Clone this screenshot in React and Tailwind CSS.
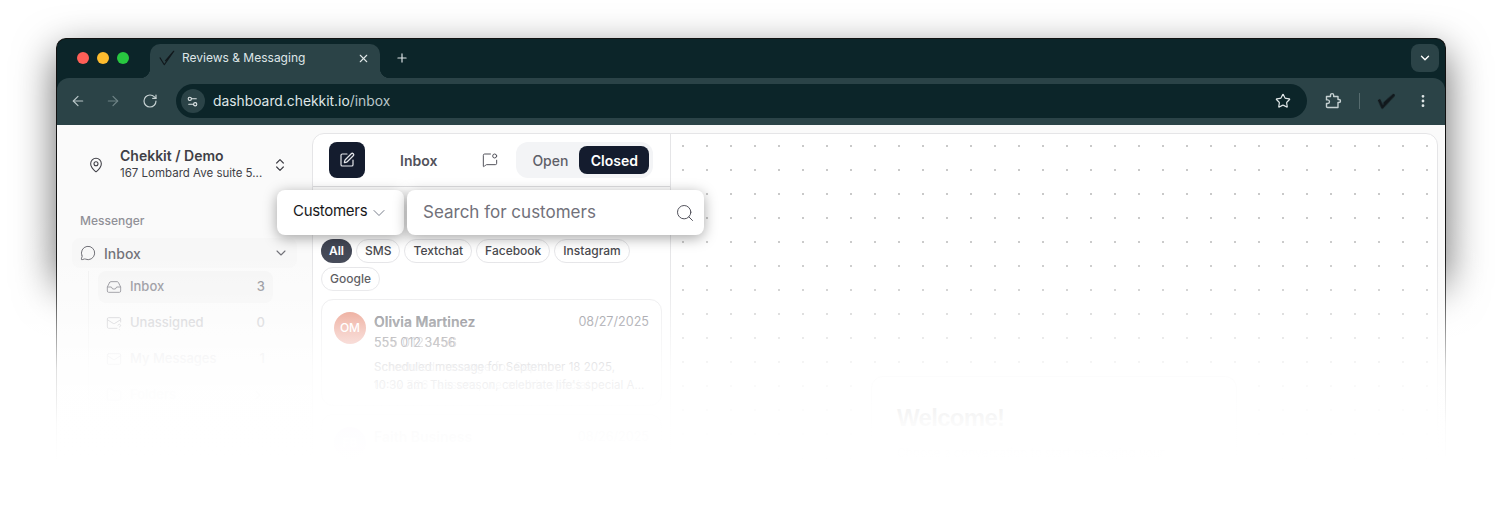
import { ArrowLeft, ArrowRight, RotateCw, Settings2, Star, X, Plus, ChevronDown, ChevronRight, ChevronsUpDown, MapPin, SquarePen, MessageCircle, Inbox, Mail, MailQuestion, Folder, Search, MessageSquareDot, EllipsisVertical } from 'lucide-react';

const chips = ['SMS', 'Textchat', 'Facebook', 'Instagram', 'Google'];

function Check({ className, width = 1.3 }) {
  return (
    <svg viewBox="0 0 20 20" fill="none" className={className}>
      <path d="M2 9.5 L7 17.5 L17.5 2.5 L8 13.5" stroke="currentColor" strokeWidth={width} strokeLinejoin="round" />
    </svg>
  );
}

function SubItem({ icon: Icon, label, count, tone, active }) {
  return (
    <div className={`flex h-[32px] items-center justify-between rounded-lg px-[8px] text-[13px] font-medium ${tone} ${active ? 'bg-[#f5f5f5]' : ''}`}>
      <div className="flex items-center gap-[8px]">
        <Icon className="size-[16px]" strokeWidth={1.5} />
        <span>{label}</span>
      </div>
      <span>{count}</span>
    </div>
  );
}

function Sidebar() {
  return (
    <aside className="flex w-[255px] shrink-0 flex-col px-[15px]">
      <div className="mt-[22px] flex items-center">
        <MapPin className="ml-[16px] size-[16px] text-[#3f3f46]" strokeWidth={1.6} />
        <div className="ml-[16px] w-[144px]">
          <div className="text-[14px] font-semibold leading-[18px] text-[#3f3f46]">Chekkit / Demo</div>
          <div className="whitespace-nowrap text-[11.5px] leading-[17px] text-[#3f3f46]">167 Lombard Ave suite 5...</div>
        </div>
        <ChevronsUpDown className="ml-[8px] size-[16px] text-[#3f3f46]" strokeWidth={1.8} />
      </div>
      <div className="ml-[8px] mt-[30px] text-[12px] font-medium text-[#8f8f96]">Messenger</div>
      <div className="mt-[8px] flex h-[30px] items-center justify-between rounded-lg bg-[#f7f7f7] px-[8px] text-[14px] font-medium text-[#6b6b72]">
        <div className="flex items-center gap-[8px]">
          <MessageCircle className="size-[16px]" strokeWidth={1.5} />
          <span>Inbox</span>
        </div>
        <ChevronDown className="size-[16px]" strokeWidth={1.6} />
      </div>
      <div className="ml-[16px] mt-[3px] flex w-[201px] flex-col gap-[4px] border-l border-[#f0f0f0] pl-[9px] pr-[16px]">
        <SubItem icon={Inbox} label="Inbox" count="3" tone="text-[#8b8b92]" active />
        <SubItem icon={MailQuestion} label="Unassigned" count="0" tone="text-[#c4c4c8]" />
        <SubItem icon={Mail} label="My Messages" count="1" tone="text-[#dcdce0]" />
        <SubItem icon={Folder} label="Folders" count={<ChevronRight className="size-[14px]" />} tone="text-[#e6e6ea]" />
      </div>
    </aside>
  );
}

function Card({ initials, avatar, name, date, phone, lines, ghost }) {
  return (
    <div className="relative h-[107px] rounded-xl border border-[#e8e8ea] bg-white px-[12px] pt-[12px]">
      <div className={`flex size-[32px] items-center justify-center rounded-full text-[12px] font-medium text-white ${avatar}`}>{initials}</div>
      <div className="absolute left-[52px] right-[12px] top-[12px]">
        <div className="flex justify-between">
          <span className="text-[14px] font-semibold leading-[20px] text-[#52525b]">{name}</span>
          <span className="text-[12.6px] leading-[20px] text-[#71717a]">{date}</span>
        </div>
        <div className="mt-[1px] text-[12.5px] leading-[20px] text-[#52525b]">{phone}</div>
        <div className="mt-[5px] whitespace-nowrap text-[11.5px] leading-[18px] text-[#71717a]">
          {lines.map((l) => <div key={l}>{l}</div>)}
        </div>
      </div>
      {ghost && (
        <div className="absolute left-[52px] right-[12px] top-[12px] opacity-60">
          <div className="text-[14px] font-semibold leading-[20px] text-[#71717a]">{ghost.name}</div>
          <div className="mt-[1px] text-[12.5px] leading-[20px] tracking-[0.5px] text-[#71717a]">{ghost.phone}</div>
          <div className="mt-[5px] whitespace-nowrap text-[11.5px] leading-[18px] tracking-[0.4px] text-[#a1a1aa]">
            {ghost.lines.map((l) => <div key={l}>{l}</div>)}
          </div>
        </div>
      )}
    </div>
  );
}

function ListColumn() {
  return (
    <div className="flex w-[358px] shrink-0 flex-col border-r border-[#e5e5e7]">
      <div className="flex h-[53px] items-center border-b border-[#dedee0] pl-[16px]">
        <div className="flex size-[36px] items-center justify-center rounded-lg bg-[#141c2e] text-[#e5e7eb]">
          <SquarePen className="size-[16px]" strokeWidth={1.8} />
        </div>
        <span className="ml-[35px] text-[14px] font-semibold text-[#52525b]">Inbox</span>
        <MessageSquareDot className="ml-[45px] size-[16px] text-[#52525b]" strokeWidth={1.5} />
        <div className="ml-[18px] flex h-[36px] w-[137px] items-center justify-between rounded-xl bg-[#f3f4f6] pl-[16px] pr-[4px]">
          <span className="text-[14px] font-medium text-[#5f6068]">Open</span>
          <span className="flex h-[28px] w-[70px] items-center justify-center rounded-lg bg-[#141c2e] text-[14px] font-semibold text-white">Closed</span>
        </div>
      </div>
      <div className="mt-[52px] flex flex-wrap gap-[4px] px-[8px]">
        <span className="flex h-[24px] items-center rounded-full bg-[#3a3f4e] px-[8px] text-[12px] font-semibold text-white">All</span>
        {chips.map((c) => (
          <span key={c} className="flex h-[24px] items-center rounded-full border border-[#e4e4e7] bg-white px-[8px] text-[12px] font-medium text-[#3f3f46]">{c}</span>
        ))}
      </div>
      <div className="mt-[8px] flex flex-col gap-[8px] px-[8px]">
        <Card
          initials="OM"
          avatar="bg-[linear-gradient(to_bottom,#e47f66,#eb9a8c)]"
          name="Olivia Martinez"
          date="08/27/2025"
          phone="555 012 3456"
          lines={['Scheduled message for September 18 2025,', "10:30 am: This season, celebrate life's special A..."]}
          ghost={{ name: 'Olivia Martin', phone: '555 0123456', lines: ['Scheduled message for Septem', 'to 9x 726 reasons, we are his special'] }}
        />
        <Card initials="FB" avatar="bg-[#c8a0e8]" name="Faith Business" date="08/26/2025" phone="" lines={[]} />
      </div>
    </div>
  );
}

function SearchPopover() {
  return (
    <div className="absolute left-[220px] top-[65px] z-30 flex gap-[3px]">
      <div className="flex h-[45px] w-[127px] items-center rounded-lg bg-white pb-[2px] pl-[16px] text-[15px] tracking-[-0.3px] text-[#18181b] shadow-[0_3px_14px_rgba(0,0,0,0.35)]">
        Customers
        <ChevronDown className="ml-[2px] mt-[3px] size-[20px] text-[#6b7280]" strokeWidth={1.1} />
      </div>
      <div className="flex h-[45px] w-[297px] items-center justify-between rounded-lg bg-white pl-[16px] pr-[9px] text-[17px] text-[#71717a] shadow-[0_3px_14px_rgba(0,0,0,0.35)]">
        Search for customers
        <Search className="size-[20px] text-[#52525b]" strokeWidth={1.2} />
      </div>
    </div>
  );
}

export default function App() {
  return (
    <div className="relative h-[505px] overflow-hidden bg-white pl-[56px] pt-[38px] font-['Inter',sans-serif]">
      <div className="relative w-[1390px] before:absolute before:inset-x-0 before:top-0 before:h-[240px] before:rounded-[10px] before:shadow-[0_14px_40px_rgba(0,0,0,0.6)]">
        <div className="relative h-[467px] overflow-hidden rounded-t-[10px] border border-b-0 border-[#111] bg-[#0c2529]">
          {/* tab strip */}
          <div className="flex h-[39px] items-end">
            <div className="mb-[14px] ml-[20px] flex gap-[8px]">
              <span className="size-[12px] rounded-full bg-[#ff5f57]" />
              <span className="size-[12px] rounded-full bg-[#febc2e]" />
              <span className="size-[12px] rounded-full bg-[#28c840]" />
            </div>
            <div className="relative ml-[21px] flex h-[34px] w-[230px] items-center rounded-t-[10px] bg-[#2b4347] pb-[6px] pl-[8px] pr-[10px] text-[12px] text-[#dfe6e7] before:absolute before:bottom-0 before:right-full before:size-[10px] before:bg-[radial-gradient(circle_at_0_0,transparent_10px,#2b4347_10.5px)] after:absolute after:bottom-0 after:left-full after:size-[10px] after:bg-[radial-gradient(circle_at_100%_0,transparent_10px,#2b4347_10.5px)]">
              <Check className="size-[18px] text-[#11181c]" />
              <span className="ml-[6px] flex-1">Reviews &amp; Messaging</span>
              <X className="size-[13px]" strokeWidth={2} />
            </div>
            <Plus className="mb-[13px] ml-[15px] size-[14px] text-[#dfe6e7]" strokeWidth={2} />
            <div className="mb-[6px] ml-auto mr-[6px] flex size-[28px] items-center justify-center rounded-lg bg-[#2b4347]">
              <ChevronDown className="size-[14px] text-white" strokeWidth={2.4} />
            </div>
          </div>
          {/* toolbar */}
          <div className="flex h-[47px] items-center rounded-t-[12px] bg-[#2b4347] pb-[1px] pl-[13px] pr-[14px]">
            <ArrowLeft className="size-[16px] text-[#b9c6c8]" strokeWidth={1.8} />
            <ArrowRight className="ml-[19px] size-[16px] text-[#6f8386]" strokeWidth={1.8} />
            <RotateCw className="ml-[21px] size-[16px] text-[#c6d1d2]" strokeWidth={1.8} />
            <div className="ml-[18px] flex h-[34px] w-[1132px] items-center rounded-full bg-[#0c2529] pl-[5px] pr-[16px]">
              <div className="flex size-[24px] items-center justify-center rounded-full bg-[#2b4347]">
                <Settings2 className="size-[13px] text-[#dfe6e7]" strokeWidth={2} />
              </div>
              <span className="ml-[8px] flex-1 text-[13.85px] text-[#dfe6e7]">dashboard.chekkit.io<span className="text-[#b9c6c8]">/inbox</span></span>
              <Star className="size-[16px] text-[#dfe6e7]" strokeWidth={1.8} />
            </div>
            <svg viewBox="0 0 18 18" fill="none" className="ml-[17px] size-[18px] text-[#c6d1d2]">
              <path d="M2.5 4.5 H6.5 V3.2 a1.6 1.6 0 0 1 3.2 0 V4.5 H14 V7.5 h1 a1.5 1.5 0 0 1 0 3 h-1 V15.5 H3.5 a1 1 0 0 1-1-1 V11.5 h1.2 a1.8 1.8 0 0 0 0-3.6 H2.5 Z" stroke="currentColor" strokeWidth="1.4" strokeLinejoin="round" />
            </svg>
            <span className="ml-[17px] h-[16px] w-px bg-[#566b6e]" />
            <Check className="ml-[17px] size-[18px] rotate-[8deg] text-[#11181c] blur-[0.4px]" width={3} />
            <EllipsisVertical className="ml-[20px] size-[16px] text-[#dfe6e7]" strokeWidth={2.2} />
          </div>
          {/* page */}
          <div className="relative flex h-full bg-[#fafafa]">
            <Sidebar />
            <div className="pt-[8px]">
              <div className="flex h-[400px] w-[1126px] overflow-hidden rounded-t-xl border border-[#e5e5e7] bg-white">
                <ListColumn />
                <div className="flex flex-1 justify-center bg-[radial-gradient(circle,#c9c9c9_1px,transparent_1.5px)] bg-[length:24px_24px] pt-[242px]">
                  <div className="h-[120px] w-[366px] rounded-xl border border-[#e8e8ea] bg-white px-[25px] pt-[23px]">
                    <div className="font-['Liberation_Sans',sans-serif] text-[24px] font-bold tracking-[-0.7px] text-[#18181b]">Welcome!</div>
                    <div className="mt-[8px] text-[12px] text-[#71717a]">Choose a conversation to start messaging your customers</div>
                  </div>
                </div>
              </div>
            </div>
            <SearchPopover />
          </div>
        </div>
      </div>
      {/* fade to white */}
      <div className="pointer-events-none absolute inset-x-0 bottom-0 top-[210px] z-20 bg-[linear-gradient(to_bottom,rgba(255,255,255,0)_0px,rgba(255,255,255,0.06)_50px,rgba(255,255,255,0.25)_85px,rgba(255,255,255,0.6)_125px,rgba(255,255,255,0.87)_160px,rgba(255,255,255,0.98)_215px,rgba(255,255,255,1)_250px)]" />
    </div>
  );
}
